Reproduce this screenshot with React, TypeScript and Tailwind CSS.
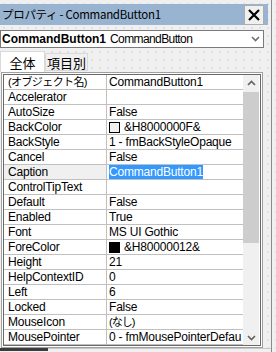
import React from "react";

type Row = {
  name: string;
  value?: string;
  swatch?: "light" | "dark";
  selected?: boolean;
  jpName?: boolean;
  jpValue?: boolean;
};

const rows: Row[] = [
  { name: "(オブジェクト名)", value: "CommandButton1", jpName: true },
  { name: "Accelerator" },
  { name: "AutoSize", value: "False" },
  { name: "BackColor", value: "&H8000000F&", swatch: "light" },
  { name: "BackStyle", value: "1 - fmBackStyleOpaque" },
  { name: "Cancel", value: "False" },
  { name: "Caption", value: "CommandButton1", selected: true },
  { name: "ControlTipText" },
  { name: "Default", value: "False" },
  { name: "Enabled", value: "True" },
  { name: "Font", value: "MS UI Gothic" },
  { name: "ForeColor", value: "&H80000012&", swatch: "dark" },
  { name: "Height", value: "21" },
  { name: "HelpContextID", value: "0" },
  { name: "Left", value: "6" },
  { name: "Locked", value: "False" },
  { name: "MouseIcon", value: "(なし)", jpValue: true },
  { name: "MousePointer", value: "0 - fmMousePointerDefau" },
];

function Chevron({ up = false, color = "#606060" }: { up?: boolean; color?: string }) {
  return (
    <svg width="9" height="6" viewBox="0 0 9 6">
      <polyline
        points={up ? "1,5 4.5,1.5 8,5" : "1,1 4.5,4.5 8,1"}
        fill="none"
        stroke={color}
        strokeWidth="1.6"
      />
    </svg>
  );
}

export default function App() {
  return (
    <div className="w-[276px] h-[352px] bg-[#f0f0f0] bg-[radial-gradient(circle,#d6d6d6_0.6px,transparent_0.9px)] bg-[length:8px_8px] flex overflow-hidden text-black font-['Liberation_Sans','Noto_Sans_CJK_JP',sans-serif]">
      <div className="w-[271px] flex flex-col pt-[4px]">
        {/* Title bar */}
        <div className="h-[21px] mr-[3px] bg-[#99b4d1] flex items-center justify-between pl-[2px] pr-[4px]">
          <span className="text-[11.5px] tracking-[-0.3px] font-['Noto_Sans_CJK_JP',sans-serif] leading-none">
            プロパティ - CommandButton1
          </span>
          <div className="w-[20px] h-[20px] bg-[#f0f0f0] border border-[#adadad] flex items-center justify-center">
            <svg width="12" height="12" viewBox="0 0 12 12">
              <path d="M1 1 L11 11 M11 1 L1 11" stroke="#000" strokeWidth="2.2" />
            </svg>
          </div>
        </div>

        {/* Object combo */}
        <div className="mt-[5px] h-[18px] w-[264px] bg-white border border-[#7a7a7a] flex items-center pl-[1px] pr-[3px] text-[12px] leading-none">
          <span className="font-bold">CommandButton1</span>
          <span className="ml-[4px] tracking-[-0.6px]">CommandButton</span>
          <span className="ml-auto">
            <Chevron color="#707070" />
          </span>
        </div>

        {/* Tabs */}
        <div className="h-[24px] flex items-end font-['Noto_Sans_CJK_JP',sans-serif] text-[13px]">
          <div className="w-[45px] h-[21px] bg-white border-t border-l border-r border-[#d9d9d9] flex items-center justify-center leading-none">
            全体
          </div>
          <div className="w-[43px] h-[18px] mb-[1px] bg-[#f0f0f0] border border-[#d9d9d9] flex items-center justify-center leading-none">
            項目別
          </div>
        </div>

        {/* Property grid */}
        <div className="ml-[1px] w-[262px] h-[276px] border border-[#a0a0a0] bg-white p-px">
          <div className="h-full border border-[#696969] flex">
            <div className="w-[239px] shrink-0 overflow-hidden flex flex-col text-[12px] tracking-[-0.2px]">
              {rows.map((r) => (
                <div key={r.name} className="h-[15px] flex border-b border-[#c0c0c0] leading-[14px]">
                  <div
                    className={`w-[103px] shrink-0 pl-[4px] border-r border-[#c0c0c0] whitespace-nowrap overflow-hidden ${
                      r.selected ? "bg-[#f0f0f0]" : ""
                    }`}
                  >
                    {r.jpName ? (
                      <span className="text-[11px] tracking-[-0.6px]">{r.name}</span>
                    ) : (
                      r.name
                    )}
                  </div>
                  <div className="flex-1 min-w-0 pl-[2px] flex items-center whitespace-nowrap overflow-hidden">
                    {r.swatch && (
                      <span
                        className={`w-[11px] h-[11px] border border-black mr-[4px] shrink-0 ${
                          r.swatch === "light" ? "bg-[#f0f0f0]" : "bg-black"
                        }`}
                      />
                    )}
                    {r.selected ? (
                      <span className="bg-[#3399ff] text-white">{r.value}</span>
                    ) : r.jpValue ? (
                      <span className="text-[11px] tracking-[-1px]">{r.value}</span>
                    ) : (
                      <span>{r.value}</span>
                    )}
                  </div>
                </div>
              ))}
            </div>
            {/* Scrollbar */}
            <div className="w-[16px] shrink-0 bg-[#f0f0f0] flex flex-col">
              <div className="h-[15px] flex items-center justify-center">
                <Chevron up />
              </div>
              <div className="mt-[2px] h-[151px] bg-[#cdcdcd]" />
              <div className="flex-1" />
              <div className="h-[15px] flex items-center justify-center">
                <Chevron />
              </div>
            </div>
          </div>
        </div>

        {/* Bottom edge */}
        <div className="flex h-[4px]">
          <div className="w-[48px] h-[3px] bg-[#3c3c3c]" />
          <div className="flex-1 border-t border-[#c8c8c8] bg-[#f0f0f0]" />
        </div>
      </div>
      <div className="w-px bg-[#8a8a8a]" />
    </div>
  );
}
